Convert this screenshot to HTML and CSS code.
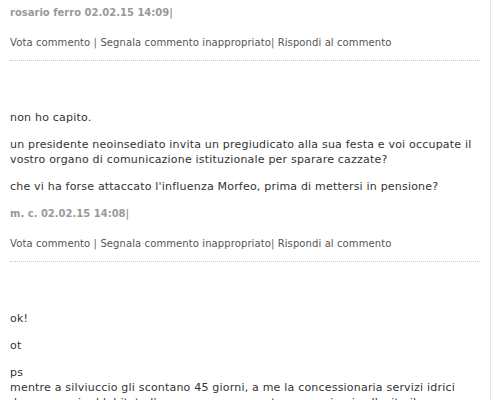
FILE: index.html
```html
<!DOCTYPE html>
<html lang="it">
<head>
    <meta charset="UTF-8">
    <title>Commenti</title>
    <link rel="stylesheet" href="styles.css">
</head>
<body>
    <div class="comments">
        <div class="comment first">
            <div class="comment-meta">rosario ferro 02.02.15 14:09|</div>
            <div class="comment-links">
                <a href="#">Vota commento</a> | <a href="#">Segnala commento inappropriato</a>| <a href="#">Rispondi al commento</a>
            </div>
        </div>

        <div class="comment">
            <div class="comment-body">
                <p>non ho capito.</p>
                <p>un presidente neoinsediato invita un pregiudicato alla sua festa e voi occupate il vostro organo di comunicazione istituzionale per sparare cazzate?</p>
                <p>che vi ha forse attaccato l'influenza Morfeo, prima di mettersi in pensione?</p>
            </div>
            <div class="comment-meta">m. c. 02.02.15 14:08|</div>
            <div class="comment-links">
                <a href="#">Vota commento</a> | <a href="#">Segnala commento inappropriato</a>| <a href="#">Rispondi al commento</a>
            </div>
        </div>

        <div class="comment">
            <div class="comment-body">
                <p>ok!</p>
                <p>ot</p>
                <p>ps<br>mentre a silviuccio gli scontano 45 giorni, a me la concessionaria servizi idrici dopo avermi addebitato l'acqua non consumata per anni, mi sollecita il pagamento</p>
            </div>
        </div>
    </div>
</body>
</html>
```

FILE: styles.css
```css
* {
    margin: 0;
    padding: 0;
    box-sizing: border-box;
}

body {
    font-family: "DejaVu Sans", Verdana, sans-serif;
    font-size: 11px;
    line-height: 15px;
    color: #333;
    background: #fff;
}

.comments {
    width: 491px;
    min-height: 100vh;
    padding: 0 10px;
    border-right: 1px solid #e6e6e6;
}

.comment {
    padding-bottom: 10px;
    border-bottom: 1px dotted #c8c8c8;
}

.comment.first {
    padding-top: 3px;
}

.comment-body {
    padding-top: 49px;
    letter-spacing: 0.2px;
}

.comment-body p {
    margin-bottom: 12px;
}

.comment-meta {
    margin-top: 2px;
    font-size: 10px;
    font-weight: bold;
    color: #999;
}

.comment-links {
    margin-top: 15px;
    font-size: 10px;
    letter-spacing: 0.1px;
    color: #666;
}

.comment-links a {
    color: #555;
    text-decoration: none;
}
```
